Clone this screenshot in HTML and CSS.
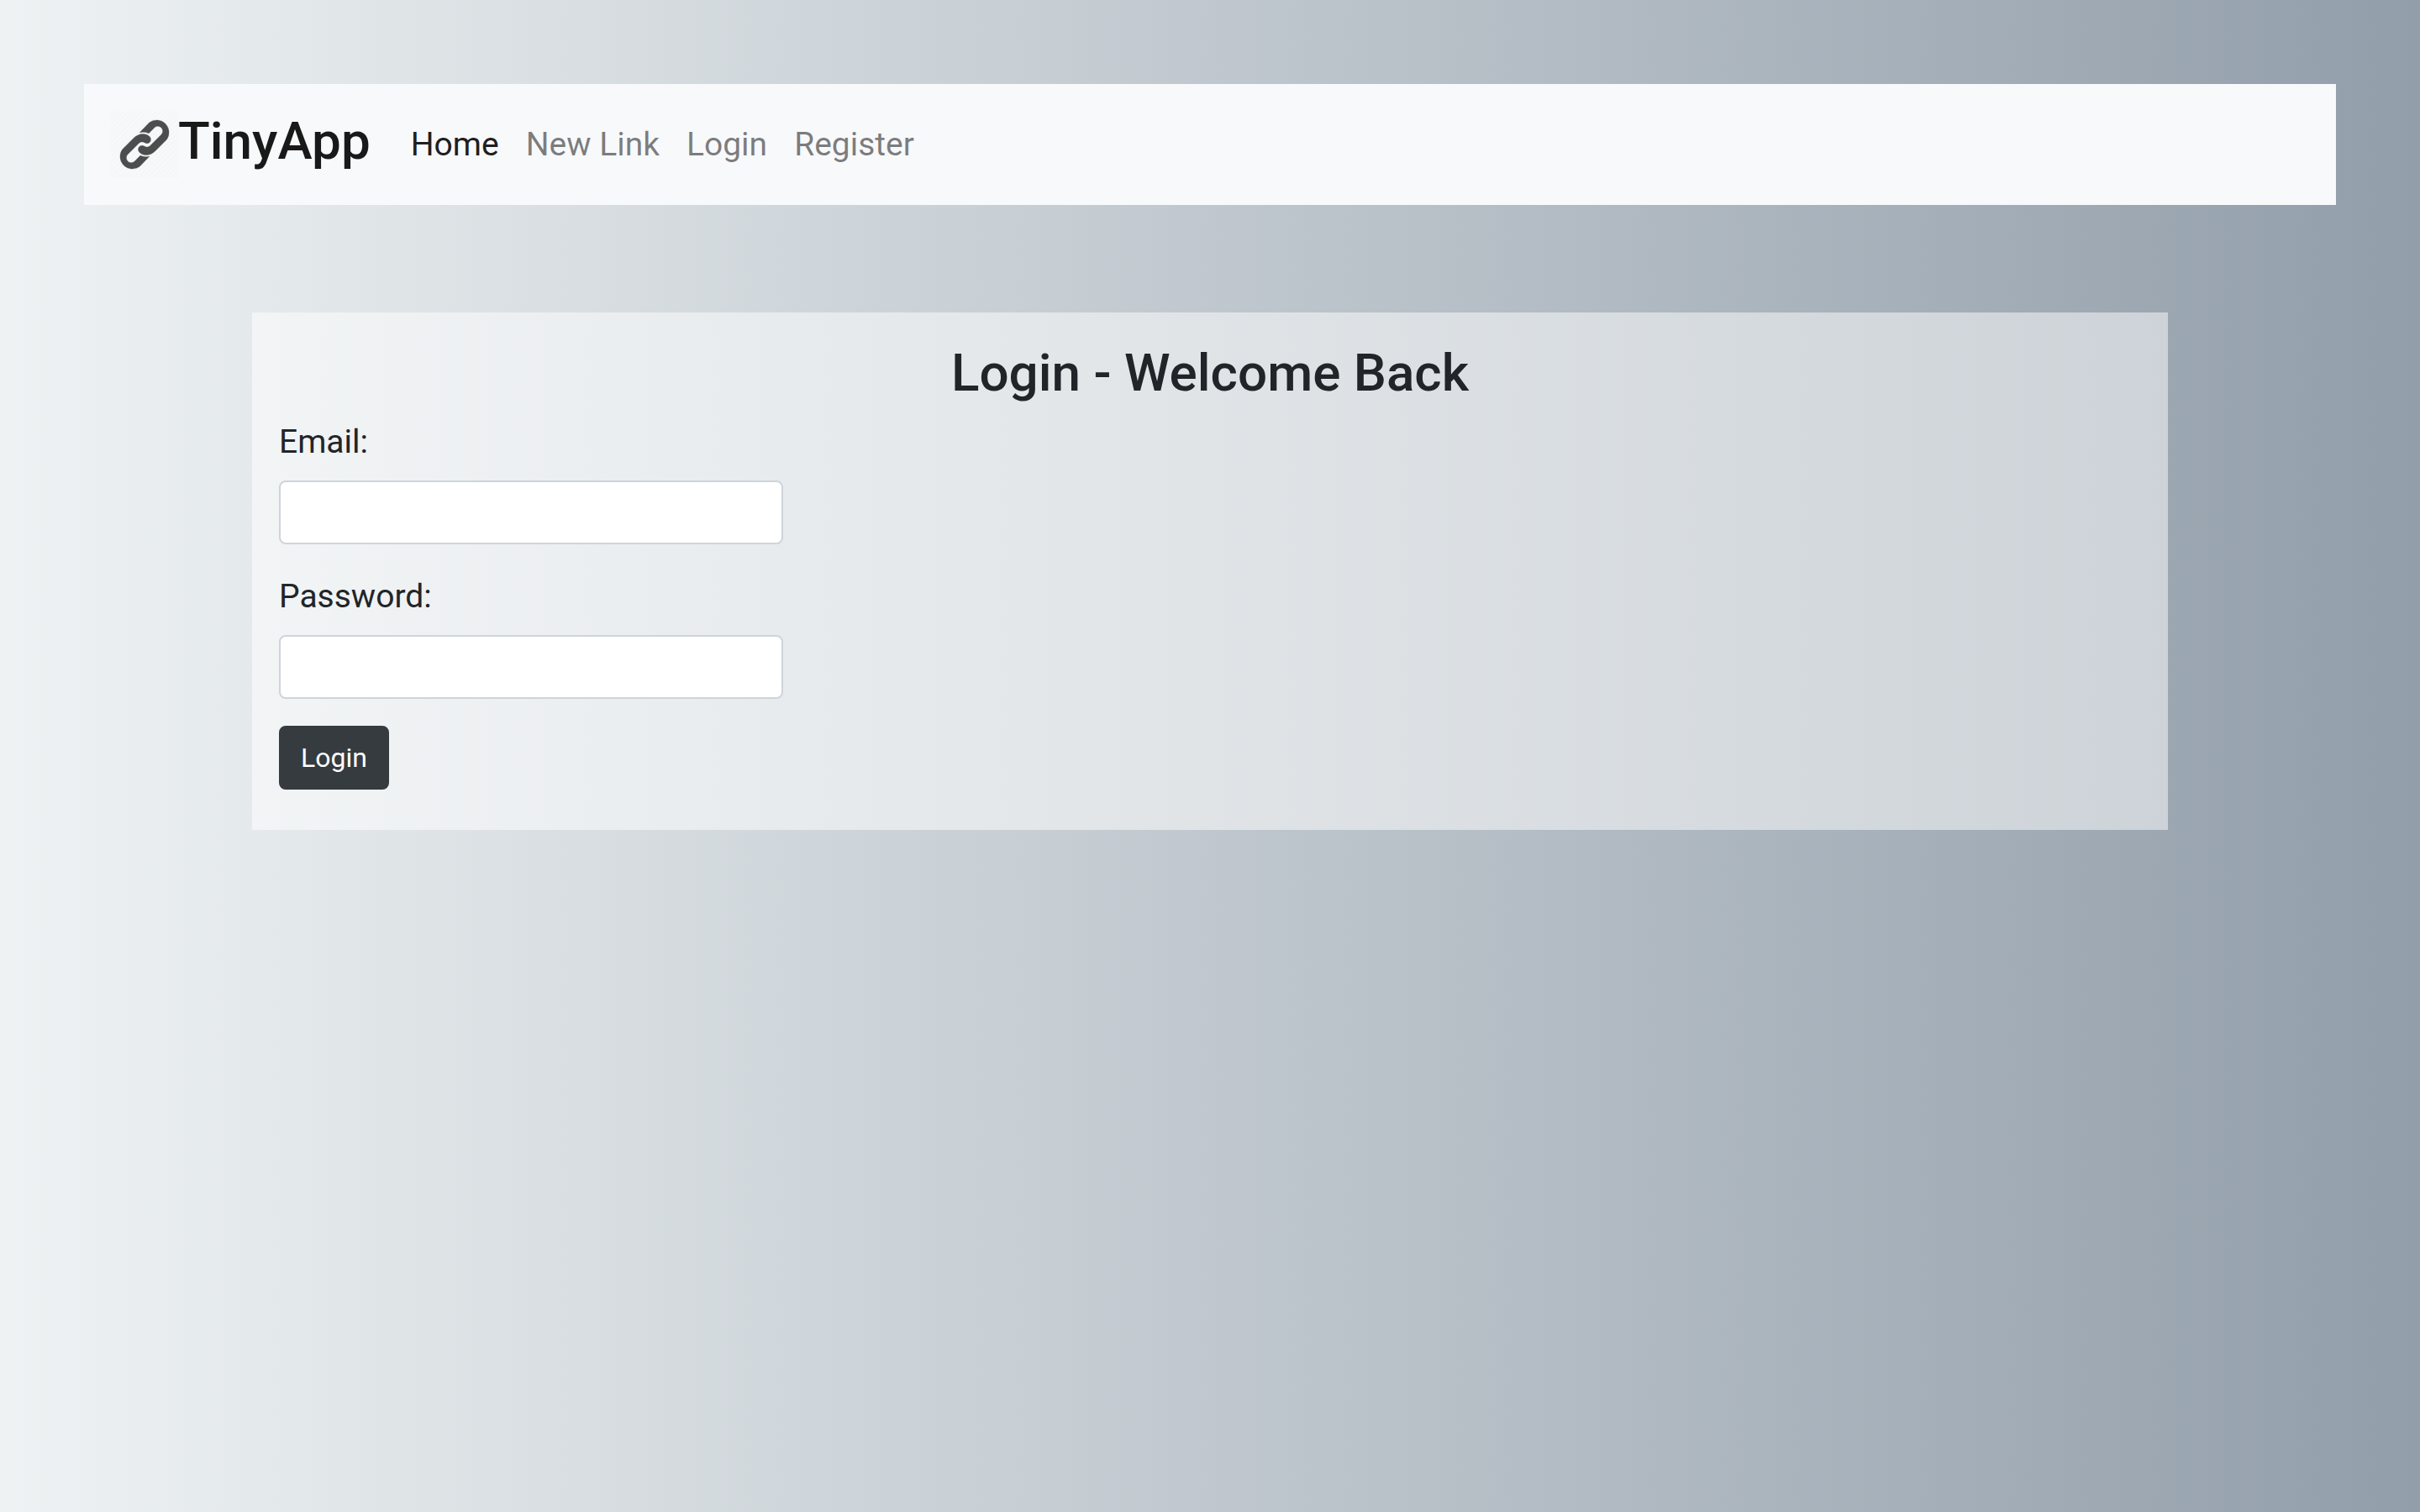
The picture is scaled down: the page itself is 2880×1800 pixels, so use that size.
FILE: index.html
```html
<!DOCTYPE html>
<html lang="en">
<head>
  <meta charset="utf-8">
  <meta name="viewport" content="width=device-width, initial-scale=1">
  <title>TinyApp</title>
  <link rel="stylesheet" href="styles.css">
</head>
<body>
  <header class="navbar">
    <a class="brand" href="#">
      <svg class="brand-icon" viewBox="129 129 234 234" aria-hidden="true">
        <defs>
          <path id="chain-link" d="M229,204 L263,169 A43,43 0 0 1 323,229 L285,267 C270,283 248,288 231,276 C219,267 224,250 237,250 C247,250 250,260 264,252 L305,211 A17,17 0 0 0 281,187 L261,207 Q246,201 229,204 Z"/>
        </defs>
        <use href="#chain-link"/>
        <use href="#chain-link" transform="rotate(180 246 246)"/>
      </svg>
      <span>TinyApp</span>
    </a>
    <nav class="nav-links">
      <a class="nav-link active" href="#">Home</a>
      <a class="nav-link" href="#">New Link</a>
      <a class="nav-link" href="#">Login</a>
      <a class="nav-link" href="#">Register</a>
    </nav>
  </header>

  <main class="card">
    <h1 class="card-title">Login - Welcome Back</h1>
    <form class="login-form">
      <div class="field">
        <label for="email">Email:</label>
        <input class="text-input" id="email" type="email" name="email">
      </div>
      <div class="field">
        <label for="password">Password:</label>
        <input class="text-input" id="password" type="password" name="password">
      </div>
      <button class="button" type="submit">Login</button>
    </form>
  </main>
</body>
</html>
```
FILE: styles.css
```css
* {
  box-sizing: border-box;
}

body {
  min-height: 100vh;
  margin: 0;
  padding: 100px;
  background: linear-gradient(to left, #929eaa, #eef2f3);
  color: #212529;
  font-family: Roboto, "Liberation Sans", sans-serif;
  font-size: 39px;
  line-height: 60px;
}

.navbar {
  display: flex;
  align-items: center;
  gap: 32px;
  padding: 16px 32px;
  background: #f8f9fb;
}

.brand {
  display: flex;
  align-items: flex-start;
  padding: 16px 0;
  color: rgba(0, 0, 0, 0.9);
  font-size: 62px;
  font-weight: 500;
  line-height: 72px;
  text-decoration: none;
}

.brand-icon {
  width: 80px;
  height: 80px;
  fill: #4d4d4d;
  stroke: #4d4d4d;
  stroke-width: 1px;
  background: repeating-linear-gradient(135deg, #f8f9fa 0 2px, #f5f6f7 2px 4px);
}

.nav-links {
  display: flex;
}

.nav-link {
  padding: 16px;
  color: rgba(0, 0, 0, 0.5);
  text-decoration: none;
}

.nav-link.active {
  color: rgba(0, 0, 0, 0.9);
}

.card {
  margin: 128px 200px 0;
  padding: 32px 32px 48px;
  background: rgba(255, 255, 255, 0.5);
}

.card-title {
  margin: 0 0 12px;
  font-size: 62px;
  font-weight: 500;
  line-height: 80px;
  text-align: center;
}

.login-form {
  display: flex;
  flex-direction: column;
  align-items: flex-start;
  gap: 32px;
}

.field {
  display: flex;
  flex-direction: column;
  gap: 16px;
  width: 600px;
  max-width: 100%;
}

.text-input {
  width: 100%;
  height: 76px;
  padding: 12px 24px;
  border: 2px solid #ced4da;
  border-radius: 8px;
  background: #fff;
  color: #495057;
  font: inherit;
  font-size: 32px;
}

.button {
  padding: 12px 24px;
  border: 2px solid #363b3f;
  border-radius: 8px;
  background: #363b3f;
  color: #fff;
  font: inherit;
  font-size: 32px;
  line-height: 48px;
}
```
